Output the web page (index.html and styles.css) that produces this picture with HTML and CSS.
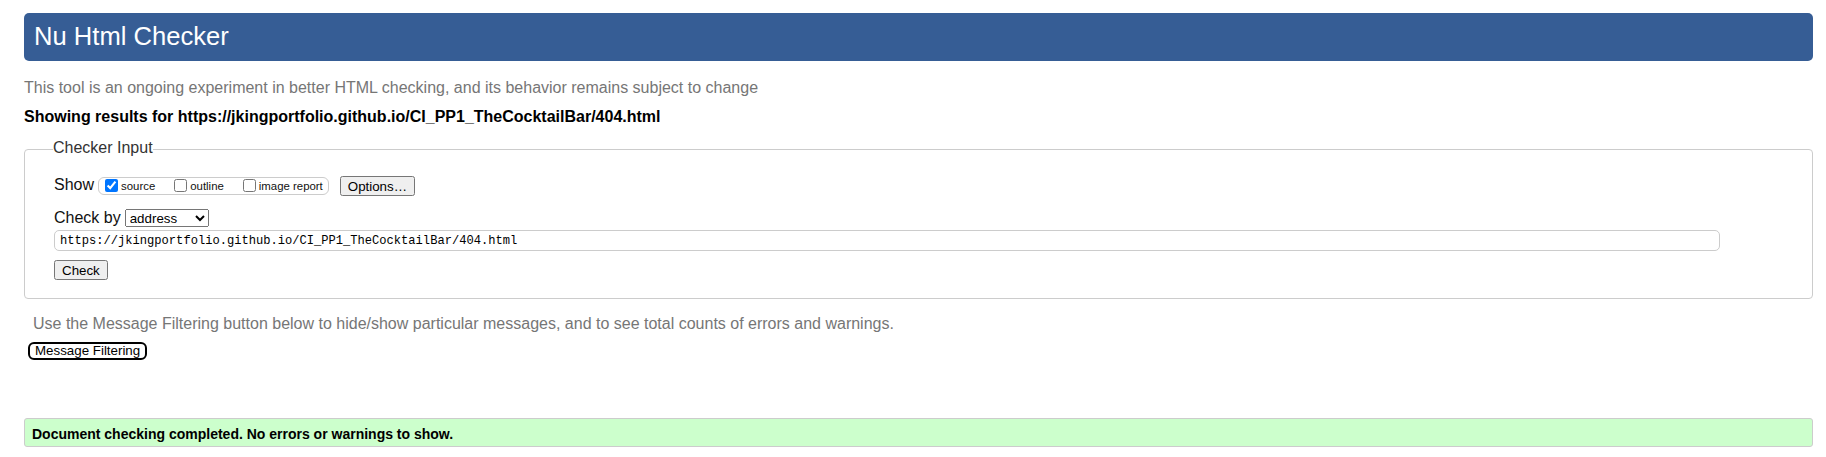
FILE: index.html
```html
<!DOCTYPE html>
<html lang="en">
<head>
<meta charset="utf-8">
<title>Nu Html Checker</title>
<link rel="stylesheet" href="styles.css">
</head>
<body>
<h1 class="title">Nu Html Checker</h1>
<p class="intro">This tool is an ongoing experiment in better HTML checking, and its behavior remains subject to change</p>
<p class="results-for">Showing results for https://jkingportfolio.github.io/CI_PP1_TheCocktailBar/404.html</p>
<form class="checker">
  <fieldset class="checker-input">
    <legend class="checker-legend">Checker Input</legend>
    <div class="row show-row">
      <span class="row-label">Show</span>
      <span class="show-group">
        <label class="opt"><input type="checkbox" checked><span>source</span></label>
        <label class="opt"><input type="checkbox"><span>outline</span></label>
        <label class="opt"><input type="checkbox"><span>image report</span></label>
      </span>
      <button type="button" class="btn options-btn">Options…</button>
    </div>
    <div class="row checkby-row">
      <span class="row-label">Check by</span>
      <select class="checkby-select"><option>address</option></select>
    </div>
    <input class="url-input" type="url" value="https://jkingportfolio.github.io/CI_PP1_TheCocktailBar/404.html">
    <div class="row check-row">
      <button type="button" class="btn check-btn">Check</button>
    </div>
  </fieldset>
</form>
<p class="filter-hint">Use the Message Filtering button below to hide/show particular messages, and to see total counts of errors and warnings.</p>
<button type="button" class="filter-btn">Message Filtering</button>
<p class="success">Document checking completed. No errors or warnings to show.</p>
</body>
</html>
```

FILE: styles.css
```css
html {
  background: #fff;
}

body {
  margin: 0;
  padding: 0 13px 0 24px;
  font-family: "Liberation Sans", Arial, sans-serif;
  font-size: 16px;
  line-height: 18px;
  color: #111;
}

.title {
  margin: 13px 0 0;
  padding: 9px 10px 10px;
  background: #365d95;
  color: #fff;
  font-size: 25.6px;
  line-height: 29px;
  font-weight: normal;
  border-radius: 5px;
}

.intro {
  margin: 18px 0 0;
  color: #767676;
}

.results-for {
  margin: 11px 0 0;
  font-weight: bold;
  color: #000;
}

.checker {
  margin: 13px 0 0;
}

.checker-input {
  margin: 0;
  padding: 0 29px 18px 29px;
  border: 1px solid #ccc;
  border-radius: 4px;
  min-width: 0;
}

.checker-legend {
  padding: 0 0 3px;
  margin-left: -1px;
  color: #333;
  line-height: 18px;
}

.row {
  display: flex;
  align-items: flex-start;
}

.row-label {
  white-space: nowrap;
}

.show-row {
  margin-top: 16px;
  height: 20px;
}

.show-group {
  display: inline-flex;
  align-items: flex-start;
  gap: 15px;
  box-sizing: border-box;
  height: 18px;
  margin: 1px 0 0 4px;
  padding: 1px 5px 0 2px;
  border: 1px solid #ccc;
  border-radius: 6px;
  font-size: 11.4px;
  line-height: normal;
  color: #111;
}

.opt {
  display: inline-flex;
  align-items: flex-start;
  white-space: nowrap;
}

.opt input {
  margin: 0 3px 0 4px;
  width: 13px;
  height: 13px;
}

.opt span {
  padding-top: 1px;
}

.btn {
  box-sizing: border-box;
  height: 20px;
  padding: 0 6px;
  font-family: "Liberation Sans", Arial, sans-serif;
  font-size: 13.333px;
  color: #000;
}

.options-btn {
  margin-left: 11px;
}

.checkby-row {
  margin-top: 13px;
}

.checkby-select {
  box-sizing: border-box;
  margin-left: 4px;
  width: 84px;
  height: 18px;
  font-family: "Liberation Sans", Arial, sans-serif;
  font-size: 13.333px;
  color: #000;
}

.url-input {
  display: block;
  box-sizing: border-box;
  margin-top: 3px;
  width: calc(100% - 63px);
  height: 21px;
  padding: 0 5px;
  border: 1px solid #ccc;
  border-radius: 5px;
  font-family: "Liberation Mono", "DejaVu Sans Mono", monospace;
  font-size: 12.1px;
  color: #000;
  background: #fff;
}

.check-row {
  margin-top: 9px;
}

.filter-hint {
  margin: 16px 0 0;
  padding-left: 9px;
  color: #767676;
}

.filter-btn {
  display: block;
  box-sizing: border-box;
  margin: 9px 0 0 4px;
  height: 18px;
  padding: 0 5px;
  background: #fff;
  border: 2px solid #000;
  border-radius: 6px;
  font-family: "Liberation Sans", Arial, sans-serif;
  font-size: 13.333px;
  line-height: 14px;
  color: #000;
}

.success {
  box-sizing: border-box;
  margin: 58px 0 0;
  height: 29px;
  padding: 7px 7px 4px;
  background: #ccffcc;
  border: 1px solid #ccc;
  border-radius: 3px;
  font-size: 14px;
  line-height: 16px;
  font-weight: bold;
  color: #000;
}
```
